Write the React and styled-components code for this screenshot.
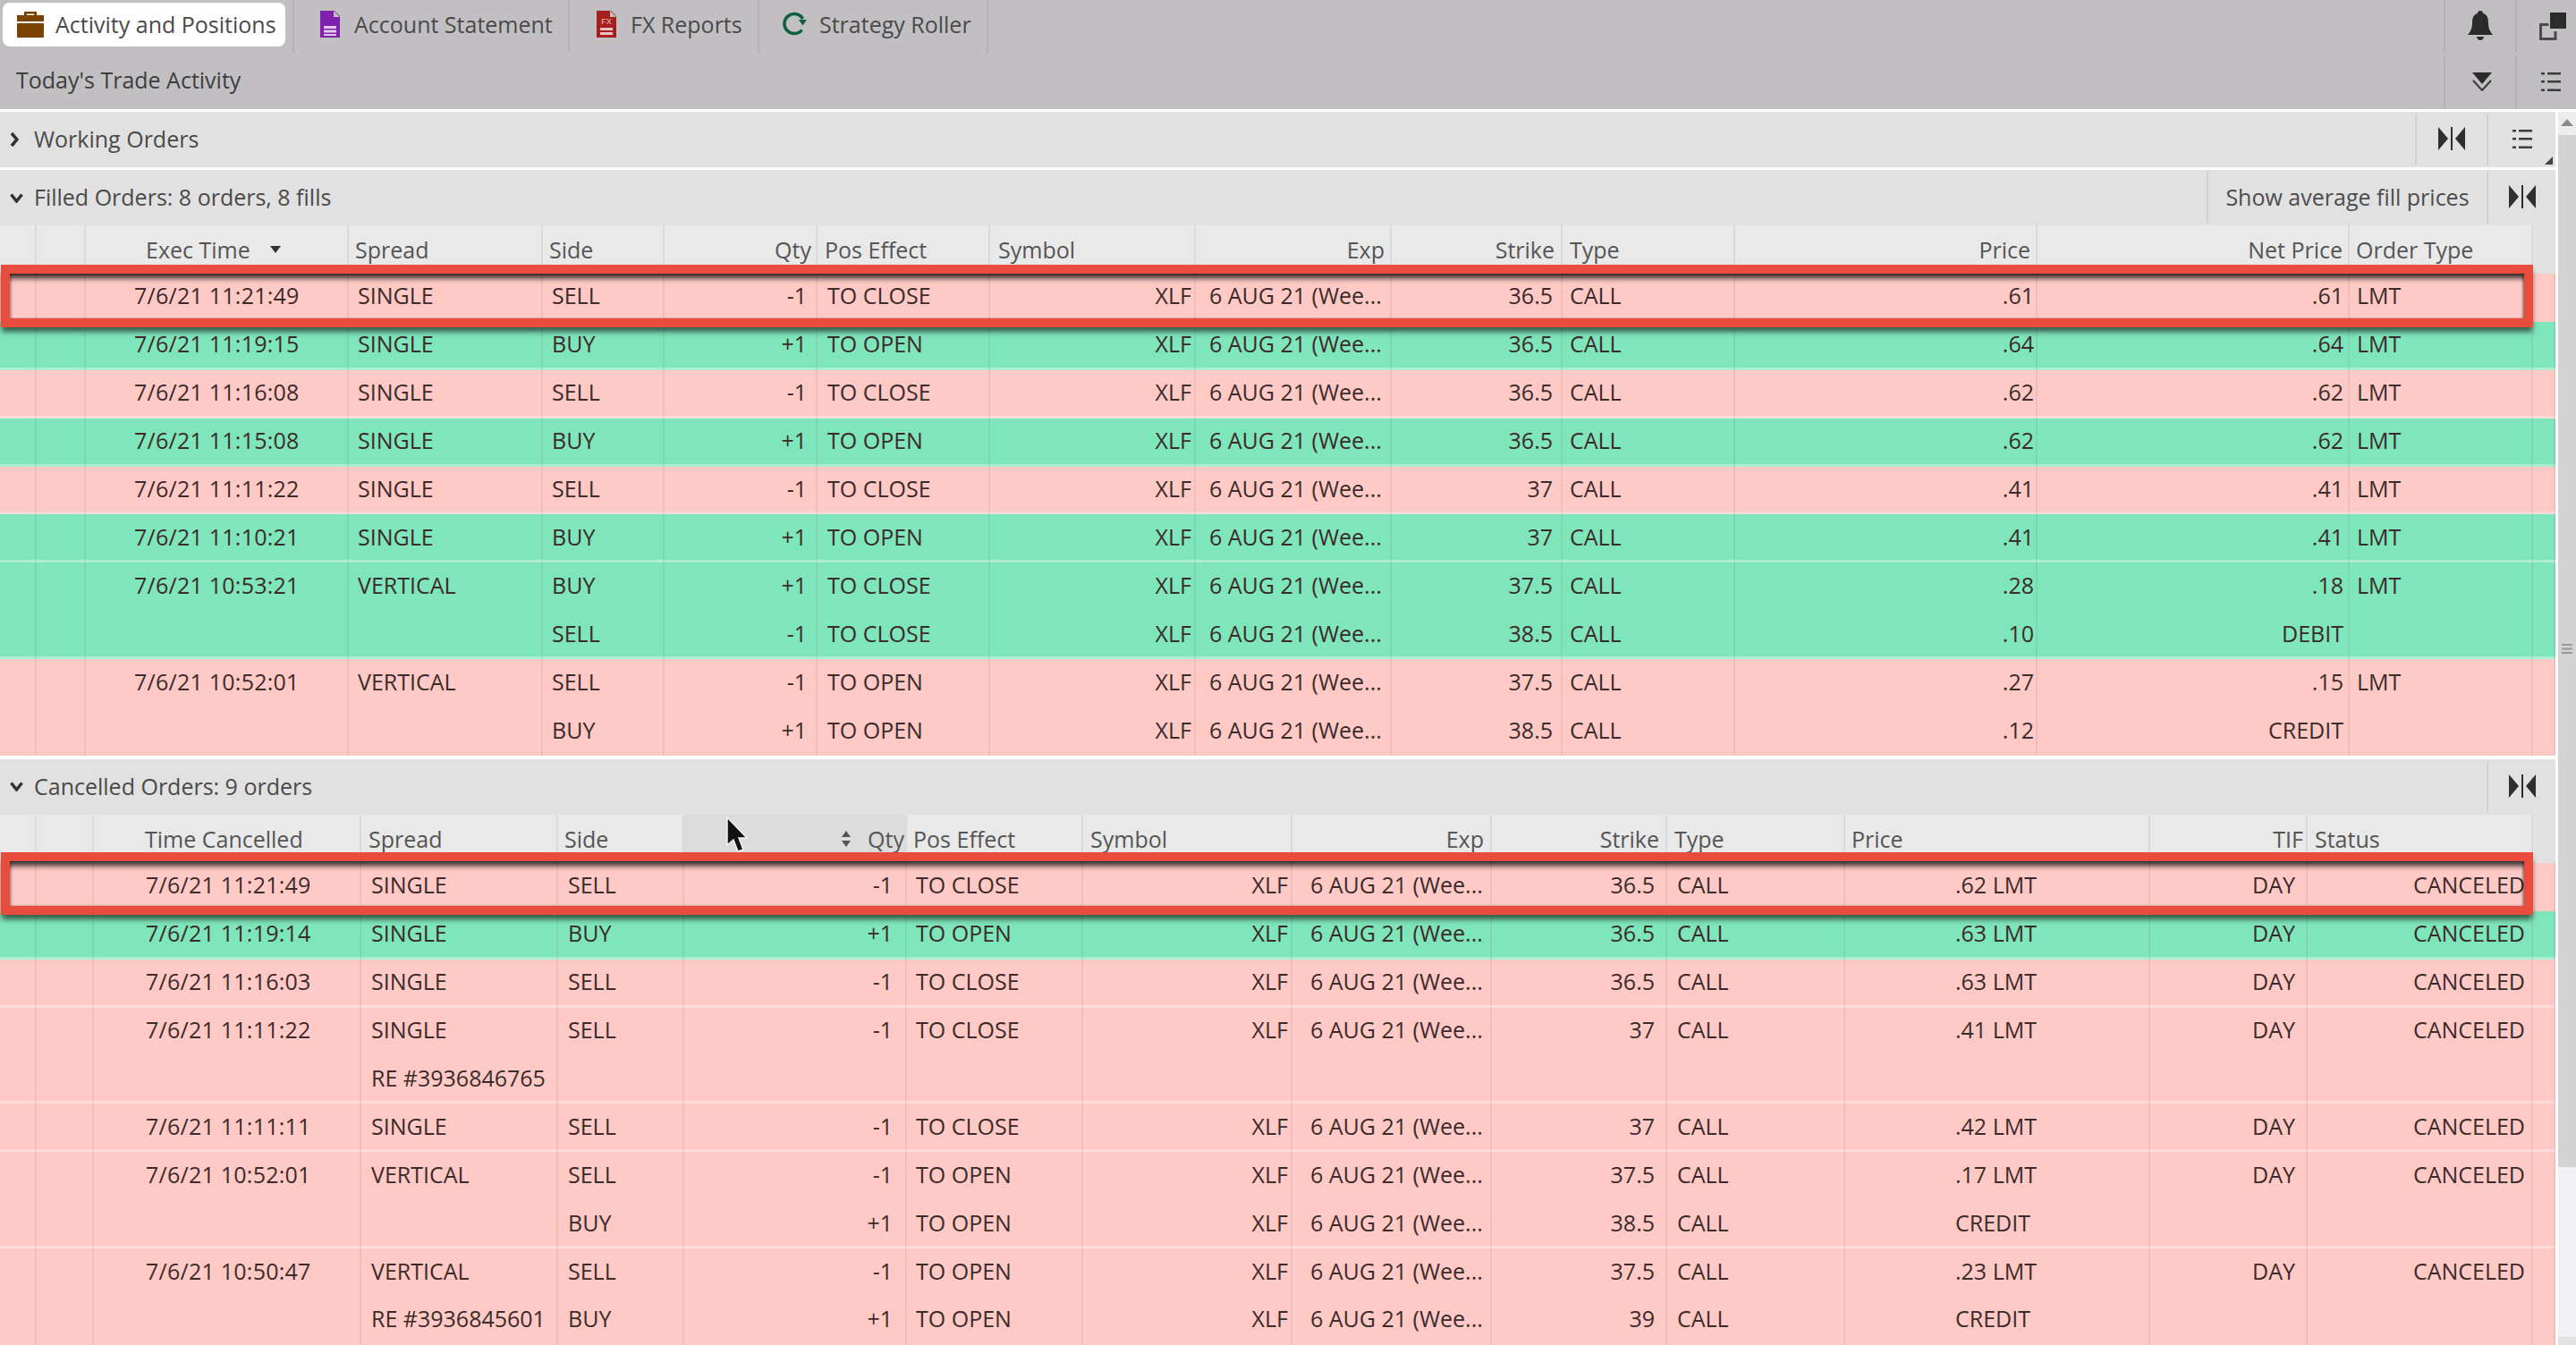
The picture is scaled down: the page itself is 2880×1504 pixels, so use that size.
import React from 'react';
import styled, { createGlobalStyle } from 'styled-components';

const GlobalStyle = createGlobalStyle`
  html, body {
    margin: 0;
    height: 100%;
    overflow: hidden;
    background: #fff;
    font-family: "Open Sans", "Noto Sans", sans-serif;
  }
`;

const PINK = '#ffc9c5';
const GREEN = '#7fe5ba';

const Page = styled.div`
  width: 2880px;
  height: 1504px;
  overflow: hidden;
  display: flex;
  flex-direction: column;
  font-size: 25px;
  color: #333;
`;

// top grey toolbar
const TopBar = styled.div`
  background: #c1bfc2;
  height: 122px;
  flex: none;
  margin-bottom: 3px;
`;

const BarRow = styled.div`
  height: 61px;
  display: flex;
  align-items: flex-start;
`;

const TabSlot = styled.div`
  width: ${(p) => p.$w}px;
  height: 58px;
  flex: none;
  box-sizing: border-box;
  border-right: 2px solid #b3b1b4;
`;

const Tab = styled.div`
  display: flex;
  align-items: center;
  height: 49px;
  box-sizing: border-box;
  margin: 3px ${(p) => (p.$active ? 8 : 0)}px 0 ${(p) => (p.$active ? 3 : 0)}px;
  padding-left: ${(p) => p.$pad}px;
  padding-bottom: 2px;
  gap: ${(p) => p.$gap}px;
  border-radius: 8px;
  background: ${(p) => (p.$active ? '#fff' : 'transparent')};
  color: #4a4a4a;
  white-space: nowrap;
`;

const BarTitle = styled.div`
  padding-left: 18px;
  height: 58px;
  line-height: 56px;
  color: #3d3d3d;
`;

const Spacer = styled.div`
  flex: 1;
`;

const IconCell = styled.div`
  width: ${(p) => p.$w}px;
  height: ${(p) => p.$h || 58}px;
  flex: none;
  box-sizing: border-box;
  border-left: 2px solid #b3b1b4;
  display: flex;
  align-items: center;
  justify-content: center;
  padding-left: ${(p) => p.$shift || 0}px;
`;

const Content = styled.div`
  flex: 1;
  min-height: 0;
  display: flex;
  gap: 3px;
`;

const Main = styled.div`
  width: 2857px;
  flex: none;
  display: flex;
  flex-direction: column;
`;

// scrollbar on the right edge
const Scrollbar = styled.div`
  width: 20px;
  flex: none;
  background: #f1f1f3;
  display: flex;
  flex-direction: column;
`;

const ScrollArrow = styled.div`
  height: 26px;
  flex: none;
  display: flex;
  justify-content: center;
  padding-top: 8px;
  box-sizing: border-box;
  background: #ededed;
`;

const ScrollThumb = styled.div`
  height: 1154px;
  flex: none;
  background: #d3d3d3;
  display: flex;
  align-items: flex-start;
  justify-content: center;
  padding-top: 569px;
  box-sizing: border-box;
`;

const ScrollEnd = styled.div`
  margin-top: auto;
  height: 9px;
  background: #e2e2e2;
`;

const SectionBar = styled.div`
  position: relative;
  height: 62px;
  flex: none;
  background: #e1e1e1;
  display: flex;
  align-items: center;
  color: #4a4a4a;
  margin-top: ${(p) => p.$gap || 0}px;
`;

const Toggle = styled.div`
  width: 38px;
  flex: none;
  display: flex;
  justify-content: flex-start;
  padding-left: 11px;
  box-sizing: border-box;
`;

const SectionTitle = styled.div`
  flex: 1;
  white-space: nowrap;
  padding-bottom: 2px;
`;

const SectionCell = styled.div`
  width: ${(p) => p.$w}px;
  height: 58px;
  flex: none;
  box-sizing: border-box;
  border-left: 2px solid #d2d2d2;
  display: flex;
  align-items: center;
  justify-content: center;
  color: #4d4d4d;
  white-space: nowrap;
  padding-bottom: 2px;
`;

const CornerMark = styled.div`
  position: absolute;
  right: 3px;
  bottom: 3px;
  width: 0;
  height: 0;
  border-left: 9px solid transparent;
  border-bottom: 9px solid #444;
`;

const Grid = styled.div`
  display: grid;
  grid-template-columns: ${(p) => p.$cols};
  height: 54px;
  position: relative;
`;

const HeaderRow = styled(Grid)`
  background: #e1e1e1;
`;

const HeadCell = styled.div`
  display: flex;
  align-items: center;
  justify-content: ${(p) => p.$justify};
  padding: 0 ${(p) => (p.$justify === 'flex-end' ? p.$pad : 0)}px 0 ${(p) => (p.$justify === 'flex-start' ? p.$pad : 0)}px;
  box-sizing: border-box;
  background: ${(p) => (p.$hover ? '#dcdcdc' : p.$blank ? 'transparent' : '#e9e9e9')};
  border-right: ${(p) => (p.$blank ? '0' : '2px solid #dadada')};
  color: #555;
  white-space: nowrap;
  gap: ${(p) => p.$gap}px;
  position: relative;
`;

const Row = styled(Grid)`
  background: ${(p) => (p.$side === 'buy' ? GREEN : PINK)};
  box-shadow: ${(p) => (p.$sep ? 'inset 0 -3px 0 rgba(255, 255, 255, 0.35)' : 'none')};
  z-index: ${(p) => (p.$mark ? 1 : 'auto')};
`;

const Cell = styled.div`
  display: flex;
  align-items: center;
  justify-content: ${(p) => p.$justify};
  padding: 0 ${(p) => (p.$justify === 'flex-end' ? p.$pad : 0)}px 5px ${(p) => (p.$justify === 'flex-start' ? p.$pad : 0)}px;
  box-sizing: border-box;
  border-right: 2px solid rgba(90, 40, 40, 0.08);
  color: #3b2b2b;
  white-space: nowrap;
  letter-spacing: ${(p) => p.$track}px;
`;

// red annotation drawn over the screenshot
const Highlight = styled.div`
  position: absolute;
  left: 1px;
  width: 2831px;
  top: ${(p) => p.$top}px;
  bottom: ${(p) => p.$bottom}px;
  box-sizing: border-box;
  border: 10px solid #e74c3c;
  box-shadow: 0 6px 6px -1px rgba(0, 0, 0, 0.6), inset 0 8px 6px -3px rgba(0, 0, 0, 0.8),
    inset 2px 0 2px rgba(0, 0, 0, 0.2), inset -2px 0 2px rgba(0, 0, 0, 0.3);
  pointer-events: none;
`;

const CursorMark = styled.svg`
  position: absolute;
  left: 46px;
  top: 2px;
`;

const Briefcase = () => (
  <svg width="30" height="30" viewBox="0 0 30 30">
    <path d="M8 5V1h14v4h-3V3.500h-8V5z" fill="#7a4300" />
    <path d="M0 5h30v7H0zM0 14h30v16H0z" fill="#7a4300" />
  </svg>
);

const DocIcon = ({ color, label }) => (
  <svg width="22" height="30" viewBox="0 0 22 30">
    <path d="M0 0h16l6 6v24H0z" fill={color} />
    <path d="M15 0v7h7" fill="#c1bfc2" />
    <path d="M4 17h14v3H4zM4 21.500h14v3H4zM4 26h14v2H4z" fill="#e2c8e8" opacity={label ? 0 : 1} />
    {label && (
      <>
        <text x="11" y="15" fontSize="9" fill="#e8c4c4" textAnchor="middle" fontFamily="Liberation Sans">{label}</text>
        <path d="M4 19h14v3H4zM4 24h14v3H4z" fill="#e8c4c4" />
      </>
    )}
  </svg>
);

const RollerIcon = () => (
  <svg width="28" height="27" viewBox="0 0 28 27" fill="none">
    <path d="M21.500 20.500A11 11 0 1 1 22.500 8" stroke="#0e5f3e" strokeWidth="3.500" />
    <path d="M18 9h9l-4.500 6.500z" fill="#0e5f3e" />
  </svg>
);

const BellIcon = () => (
  <svg width="28" height="34" viewBox="0 0 28 34">
    <path d="M14 0c2 0 3 1 3 3 5 1 6 6 6 11 0 6 2 9 5 13H0c3-4 5-7 5-13 0-5 1-10 6-11 0-2 1-3 3-3z" fill="#2b2b2b" />
    <path d="M10 29h8c0 2-2 4-4 4s-4-2-4-4z" fill="#2b2b2b" />
  </svg>
);

const PopoutIcon = () => (
  <svg width="30" height="31" viewBox="0 0 30 31" fill="none">
    <path d="M12 0h18v18H12z" fill="#2b2b2b" />
    <path d="M1.500 13.500h9M1.500 12v17.500H18V21" stroke="#4a4a4a" strokeWidth="3" />
  </svg>
);

const FilterDownIcon = () => (
  <svg width="24" height="21" viewBox="0 0 24 21" fill="none">
    <path d="M1 0h22L12 13z" fill="#2b2b2b" />
    <path d="M2 9l10 11 10-11" stroke="#3a3a3a" strokeWidth="2" />
  </svg>
);

const ListIcon = () => (
  <svg width="22" height="21" viewBox="0 0 22 21" fill="#3c3c3c">
    <path d="M0 0h4v2.500H0zM7 0h15v2.500H7zM0 9h4v2.500H0zM7 9h15v2.500H7zM0 18.500h4V21H0zM7 18.500h15V21H7z" />
  </svg>
);

const CollapseIcon = () => (
  <svg width="30" height="26" viewBox="0 0 30 26" fill="#2f2f2f">
    <path d="M0 0l11 13L0 26zM30 0L19 13l11 13z" />
    <path d="M14 0h2v26h-2z" />
  </svg>
);

const ChevronRight = () => (
  <svg width="10" height="18" viewBox="0 0 10 18" fill="none">
    <path d="M2 2l6 7-6 7" stroke="#333" strokeWidth="3.500" />
  </svg>
);

const ChevronDown = () => (
  <svg width="15" height="11" viewBox="0 0 15 11" fill="none">
    <path d="M1.500 1.500L7.500 9l6-7.500" stroke="#333" strokeWidth="3.500" />
  </svg>
);

const SortDown = () => (
  <svg width="12" height="8" viewBox="0 0 12 8">
    <path d="M0 0h12L6 8z" fill="#333" />
  </svg>
);

const SortBoth = () => (
  <svg width="12" height="18" viewBox="0 0 12 18" fill="#555">
    <path d="M6 0l5 7H1zM6 18l-5-7h10z" />
  </svg>
);

const GripIcon = () => (
  <svg width="12" height="11" viewBox="0 0 12 11" fill="#9a9a9a">
    <path d="M0 0h12v2H0zM0 4.500h12v2H0zM0 9h12v2H0z" />
  </svg>
);

const L = (pad) => ({ justify: 'flex-start', pad });
const R = (pad) => ({ justify: 'flex-end', pad });
const C = { justify: 'center', pad: 0 };

const FILLED_COLS = [
  { w: 41, head: '', h: C, d: C },
  { w: 55, head: '', h: C, d: C },
  { w: 294, head: 'Exec Time', sort: true, gap: 22, h: L(67), d: L(54), track: 0.25 },
  { w: 217, head: 'Spread', h: L(7), d: L(10) },
  { w: 136, head: 'Side', h: L(7), d: L(10) },
  { w: 171, head: 'Qty', h: R(5), d: R(10) },
  { w: 193, head: 'Pos Effect', h: L(8), d: L(11) },
  { w: 230, head: 'Symbol', h: L(9), d: R(3) },
  { w: 219, head: 'Exp', h: R(6), d: L(15) },
  { w: 191, head: 'Strike', h: R(7), d: R(9) },
  { w: 193, head: 'Type', h: L(8), d: L(8) },
  { w: 338, head: 'Price', h: R(6), d: R(2) },
  { w: 349, head: 'Net Price', h: R(6), d: R(5) },
  { w: 205, head: 'Order Type', h: L(7), d: L(8) },
  { w: 25, head: '', blank: true, h: C, d: C },
];

const CANCELLED_COLS = [
  { w: 41, head: '', h: C, d: C },
  { w: 64, head: '', h: C, d: C },
  { w: 299, head: 'Time Cancelled', h: L(57), d: L(58), track: 0.25 },
  { w: 220, head: 'Spread', h: L(8), d: L(11) },
  { w: 141, head: 'Side', h: L(7), d: L(11) },
  { w: 249, head: 'Qty', hover: true, gap: 18, h: R(1), d: R(14) },
  { w: 197, head: 'Pos Effect', h: L(7), d: L(10) },
  { w: 234, head: 'Symbol', h: L(8), d: R(3) },
  { w: 223, head: 'Exp', h: R(7), d: L(20) },
  { w: 196, head: 'Strike', h: R(7), d: R(12) },
  { w: 199, head: 'Type', h: L(8), d: L(11) },
  { w: 341, head: 'Price', h: L(7), d: L(123) },
  { w: 176, head: 'TIF', h: R(3), d: R(12) },
  { w: 252, head: 'Status', h: L(8), d: R(7) },
  { w: 25, head: '', blank: true, h: C, d: C },
];

const EXP = '6 AUG 21 (Wee...';

const filled = (side, time, spread, act, qty, pos, strike, price, net, type, extra) => ({
  side,
  extra,
  cells: ['', '', time, spread, act, qty, pos, 'XLF', EXP, strike, 'CALL', price, net, type, ''],
});

const FILLED_ROWS = [
  filled('sell', '7/6/21 11:21:49', 'SINGLE', 'SELL', '-1', 'TO CLOSE', '36.5', '.61', '.61', 'LMT', { mark: true }),
  filled('buy', '7/6/21 11:19:15', 'SINGLE', 'BUY', '+1', 'TO OPEN', '36.5', '.64', '.64', 'LMT', { sep: true }),
  filled('sell', '7/6/21 11:16:08', 'SINGLE', 'SELL', '-1', 'TO CLOSE', '36.5', '.62', '.62', 'LMT', { sep: true }),
  filled('buy', '7/6/21 11:15:08', 'SINGLE', 'BUY', '+1', 'TO OPEN', '36.5', '.62', '.62', 'LMT', { sep: true }),
  filled('sell', '7/6/21 11:11:22', 'SINGLE', 'SELL', '-1', 'TO CLOSE', '37', '.41', '.41', 'LMT', { sep: true }),
  filled('buy', '7/6/21 11:10:21', 'SINGLE', 'BUY', '+1', 'TO OPEN', '37', '.41', '.41', 'LMT', { sep: true }),
  filled('buy', '7/6/21 10:53:21', 'VERTICAL', 'BUY', '+1', 'TO CLOSE', '37.5', '.28', '.18', 'LMT'),
  filled('buy', '', '', 'SELL', '-1', 'TO CLOSE', '38.5', '.10', 'DEBIT', '', { sep: true }),
  filled('sell', '7/6/21 10:52:01', 'VERTICAL', 'SELL', '-1', 'TO OPEN', '37.5', '.27', '.15', 'LMT'),
  filled('sell', '', '', 'BUY', '+1', 'TO OPEN', '38.5', '.12', 'CREDIT', ''),
];

const cancelled = (side, time, spread, act, qty, pos, strike, price, tif, status, extra) => ({
  side,
  extra,
  cells: ['', '', time, spread, act, qty, pos, act ? 'XLF' : '', act ? EXP : '', strike, strike ? 'CALL' : '', price, tif, status, ''],
});

const CANCELLED_ROWS = [
  cancelled('sell', '7/6/21 11:21:49', 'SINGLE', 'SELL', '-1', 'TO CLOSE', '36.5', '.62 LMT', 'DAY', 'CANCELED', { mark: true }),
  cancelled('buy', '7/6/21 11:19:14', 'SINGLE', 'BUY', '+1', 'TO OPEN', '36.5', '.63 LMT', 'DAY', 'CANCELED', { sep: true }),
  cancelled('sell', '7/6/21 11:16:03', 'SINGLE', 'SELL', '-1', 'TO CLOSE', '36.5', '.63 LMT', 'DAY', 'CANCELED', { sep: true }),
  cancelled('sell', '7/6/21 11:11:22', 'SINGLE', 'SELL', '-1', 'TO CLOSE', '37', '.41 LMT', 'DAY', 'CANCELED'),
  cancelled('sell', '', 'RE #3936846765', '', '', '', '', '', '', '', { sep: true }),
  cancelled('sell', '7/6/21 11:11:11', 'SINGLE', 'SELL', '-1', 'TO CLOSE', '37', '.42 LMT', 'DAY', 'CANCELED', { sep: true }),
  cancelled('sell', '7/6/21 10:52:01', 'VERTICAL', 'SELL', '-1', 'TO OPEN', '37.5', '.17 LMT', 'DAY', 'CANCELED'),
  cancelled('sell', '', '', 'BUY', '+1', 'TO OPEN', '38.5', 'CREDIT', '', '', { sep: true }),
  cancelled('sell', '7/6/21 10:50:47', 'VERTICAL', 'SELL', '-1', 'TO OPEN', '37.5', '.23 LMT', 'DAY', 'CANCELED'),
  cancelled('sell', '', 'RE #3936845601', 'BUY', '+1', 'TO OPEN', '39', 'CREDIT', '', ''),
];

const Cursor = () => (
  <CursorMark width="26" height="42" viewBox="0 0 26 42">
    <path d="M2 1v31l7-6 5 13 6-2-5-13h9z" fill="#111" stroke="#f2f2f2" strokeWidth="1.500" />
  </CursorMark>
);

const OrderTable = ({ columns, rows, markTop, markBottom }) => {
  const template = columns.map((c) => `${c.w}px`).join(' ');
  return (
    <>
      <HeaderRow $cols={template}>
        {columns.map((c, i) => (
          <HeadCell key={i} $justify={c.h.justify} $pad={c.h.pad} $blank={c.blank} $hover={c.hover} $gap={c.gap || 0}>
            {c.hover && <Cursor />}
            {c.hover && <SortBoth />}
            <span>{c.head}</span>
            {c.sort && <SortDown />}
          </HeadCell>
        ))}
      </HeaderRow>
      {rows.map((row, r) => (
        <Row
          key={r}
          $cols={template}
          $side={row.side}
          $sep={row.extra && row.extra.sep}
          $mark={row.extra && row.extra.mark}
        >
          {row.cells.map((text, i) => (
            <Cell key={i} $justify={columns[i].d.justify} $pad={columns[i].d.pad} $track={columns[i].track || 0}>
              {text}
            </Cell>
          ))}
          {row.extra && row.extra.mark && <Highlight $top={markTop} $bottom={markBottom} />}
        </Row>
      ))}
    </>
  );
};

export default function App() {
  return (
    <Page>
      <GlobalStyle />
      <TopBar>
        <BarRow>
          <TabSlot $w={329}>
            <Tab $active $pad={16} $gap={13}>
              <Briefcase />
              Activity and Positions
            </Tab>
          </TabSlot>
          <TabSlot $w={308}>
            <Tab $pad={29} $gap={16}>
              <DocIcon color="#7f1fae" />
              Account Statement
            </Tab>
          </TabSlot>
          <TabSlot $w={212}>
            <Tab $pad={30} $gap={16}>
              <DocIcon color="#a61e1e" label="FX" />
              FX Reports
            </Tab>
          </TabSlot>
          <TabSlot $w={256}>
            <Tab $pad={26} $gap={13}>
              <RollerIcon />
              Strategy Roller
            </Tab>
          </TabSlot>
          <Spacer />
          <IconCell $w={80}><BellIcon /></IconCell>
          <IconCell $w={68} $shift={14}><PopoutIcon /></IconCell>
        </BarRow>
        <BarRow>
          <BarTitle>Today's Trade Activity</BarTitle>
          <Spacer />
          <IconCell $w={80} $h={61} $shift={4}><FilterDownIcon /></IconCell>
          <IconCell $w={68} $h={61} $shift={10}><ListIcon /></IconCell>
        </BarRow>
      </TopBar>
      <Content>
        <Main>
          <SectionBar>
            <Toggle><ChevronRight /></Toggle>
            <SectionTitle>Working Orders</SectionTitle>
            <SectionCell $w={80}><CollapseIcon /></SectionCell>
            <SectionCell $w={77}><ListIcon /></SectionCell>
            <CornerMark />
          </SectionBar>
          <SectionBar $gap={3}>
            <Toggle><ChevronDown /></Toggle>
            <SectionTitle>Filled Orders: 8 orders, 8 fills</SectionTitle>
            <SectionCell $w={313}>Show average fill prices</SectionCell>
            <SectionCell $w={77}><CollapseIcon /></SectionCell>
          </SectionBar>
          <OrderTable columns={FILLED_COLS} rows={FILLED_ROWS} markTop={-10} markBottom={-6} />
          <SectionBar $gap={4}>
            <Toggle><ChevronDown /></Toggle>
            <SectionTitle>Cancelled Orders: 9 orders</SectionTitle>
            <SectionCell $w={77}><CollapseIcon /></SectionCell>
          </SectionBar>
          <OrderTable columns={CANCELLED_COLS} rows={CANCELLED_ROWS} markTop={-12} markBottom={-4} />
        </Main>
        <Scrollbar>
          <ScrollArrow>
            <svg width="14" height="8" viewBox="0 0 14 8"><path d="M7 0l7 8H0z" fill="#8a8a8a" /></svg>
          </ScrollArrow>
          <ScrollThumb><GripIcon /></ScrollThumb>
          <ScrollEnd />
        </Scrollbar>
      </Content>
    </Page>
  );
}
